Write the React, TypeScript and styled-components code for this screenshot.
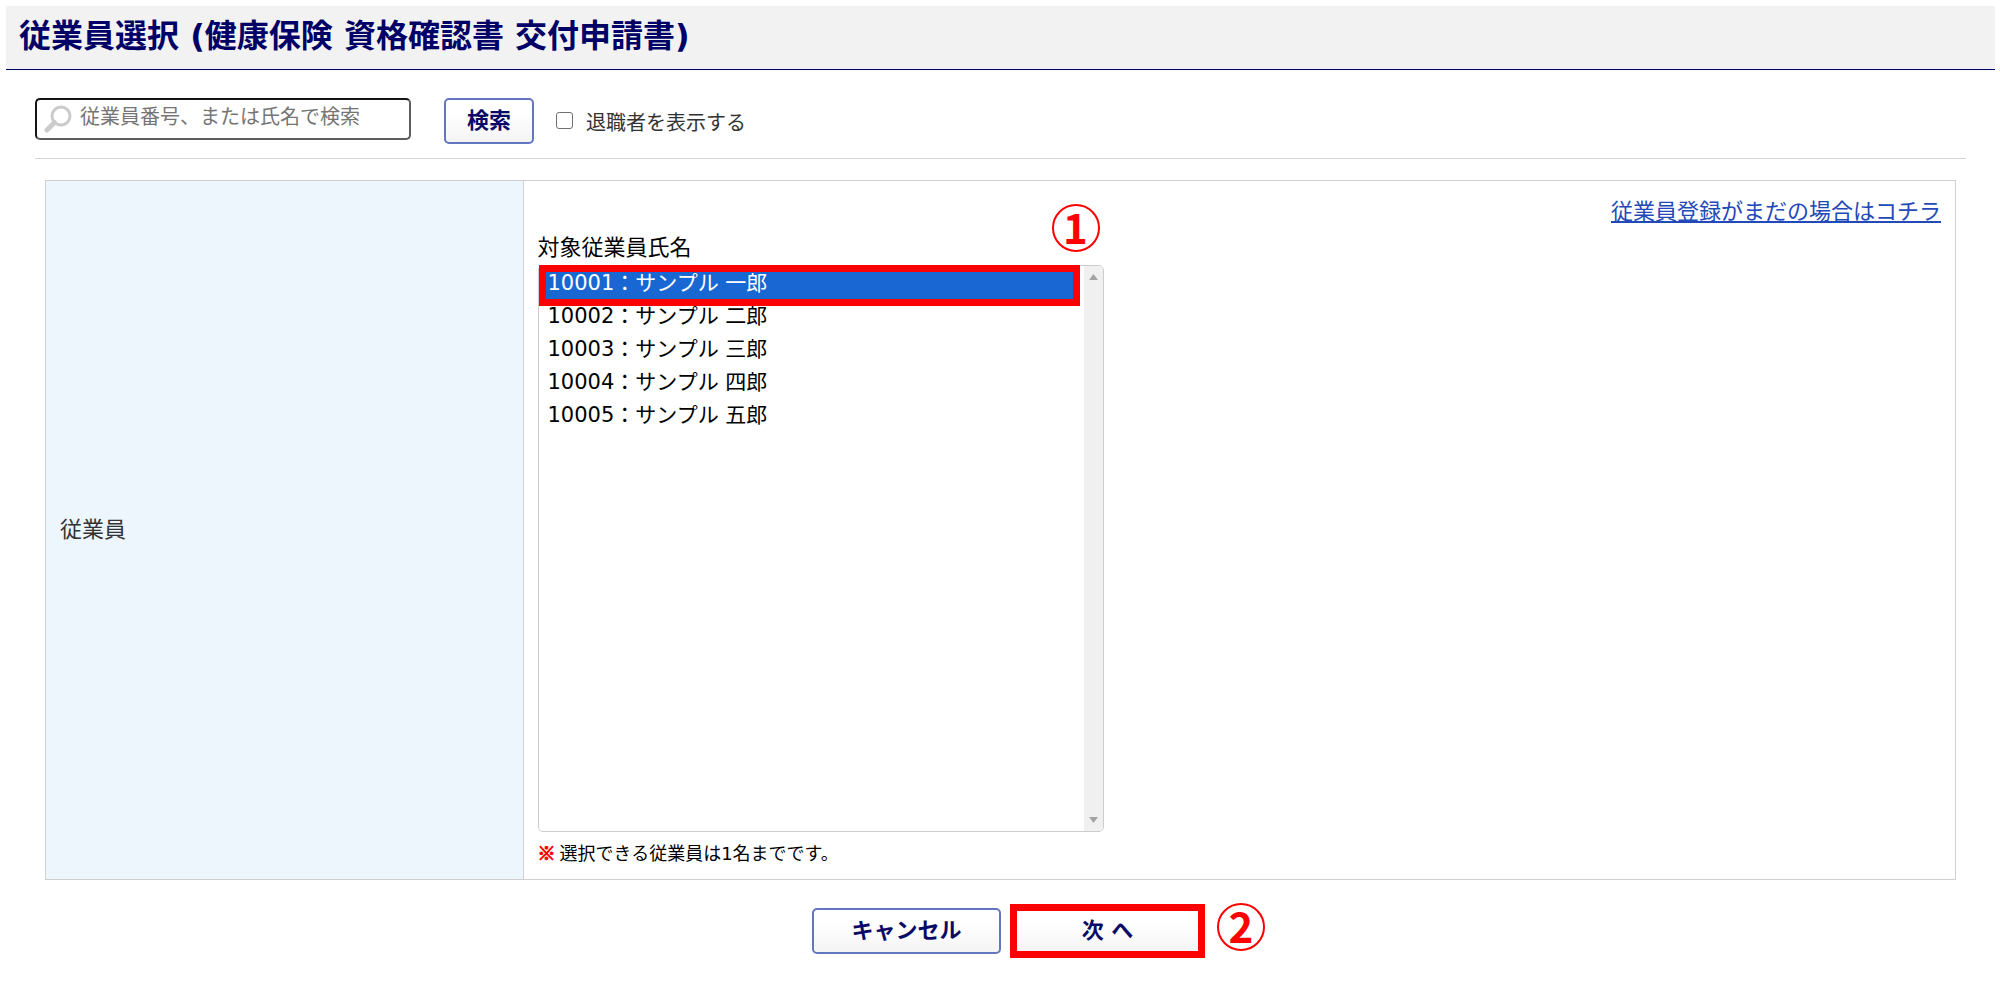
import React, { useState } from "react";
import styled, { createGlobalStyle } from "styled-components";

const GlobalStyle = createGlobalStyle`
  *, *::before, *::after { box-sizing: border-box; }
  body {
    margin: 0;
    background: #fff;
    color: #333;
    font-family: "DejaVu Sans", "Noto Sans CJK JP", sans-serif;
    font-size: 22px;
    line-height: 32px;
  }
  button, input, select { font-family: inherit; }
`;

const Page = styled.div`
  padding: 6px 5px 32px 6px;
`;

const Header = styled.header`
  padding: 10px 13px 13px;
  background: #f2f2f2;
  border-bottom: 1px solid #000066;
`;

const Title = styled.h1`
  margin: 0;
  color: #000066;
  font-size: 32px;
  line-height: 40px;
  font-weight: bold;
`;

const Main = styled.main`
  padding: 28px 29px 0;
`;

const SearchBar = styled.form`
  display: flex;
  align-items: flex-start;
  padding-bottom: 14px;
  border-bottom: 1px solid #d4d4d4;
`;

const SearchBox = styled.div`
  position: relative;
  width: 376px;
`;

const SearchIcon = styled.svg`
  position: absolute;
  left: 8px;
  top: 6px;
  width: 30px;
  height: 30px;
  pointer-events: none;
`;

const SearchInput = styled.input`
  display: block;
  width: 100%;
  height: 42px;
  padding: 0 8px 4px 43px;
  background: #fff;
  border: 2px solid;
  border-color: #151515 #5c5c5c #5c5c5c #151515;
  border-radius: 5px;
  color: #333;
  font-size: 20px;

  &::placeholder { color: #757575; opacity: 1; }
`;

const Button = styled.button<{ $width: number }>`
  width: ${({ $width }) => $width}px;
  height: 46px;
  padding: 0;
  background: linear-gradient(#ffffff 30%, #f4f4f4);
  border: 2px solid #6476c2;
  border-radius: 5px;
  color: #0a0a66;
  font-size: 22px;
  line-height: 32px;
  font-weight: bold;
`;

const SearchButton = styled(Button)`
  margin-left: 33px;
`;

const RetiredLabel = styled.label`
  display: flex;
  align-items: center;
  gap: 13px;
  margin: 9px 0 0 22px;
  font-size: 20px;
`;

const Checkbox = styled.input`
  width: 17px;
  height: 17px;
  margin: 0 0 6px;
  appearance: none;
  background: #fff;
  border: 1px solid #6f6f6f;
  border-radius: 3px;

  &:checked { background: #1967d2; }
`;

const FormTable = styled.table`
  width: calc(100% - 20px);
  margin: 21px 10px 0;
  border-collapse: collapse;
  table-layout: fixed;
`;

const HeadCell = styled.th`
  width: 25%;
  padding: 0 14px;
  background: #edf5fd;
  border: 1px solid #d0d0d0;
  font-weight: normal;
  text-align: left;
  vertical-align: middle;
`;

const BodyCell = styled.td`
  padding: 15px 14px 9px;
  background: #fff;
  border: 1px solid #d0d0d0;
  color: #000;
  vertical-align: top;
`;

const LinkRow = styled.div`
  text-align: right;
`;

const RegisterLink = styled.a`
  color: #2349b8;
  text-decoration: underline;
`;

const ListLabel = styled.label`
  display: block;
  padding: 4px 0 1px;
`;

const ListFrame = styled.div`
  position: relative;
  display: flex;
  width: 566px;
  max-width: 100%;
  height: 567px;
  border: 1px solid #ccc;
  border-radius: 5px;
`;

const EmployeeList = styled.select`
  flex: 1;
  min-width: 0;
  height: 100%;
  margin-right: 4px;
  padding: 0;
  overflow: hidden;
  background: #fff;
  border: 0;
  border-radius: 5px 0 0 5px;
  outline: none;
  color: #000;
  font-size: 21px;
`;

const Employee = styled.option`
  height: 33px;
  min-height: 33px;
  padding: 0 9px;
  line-height: 32px;

  &:checked {
    background: #1967d2 linear-gradient(#1967d2, #1967d2);
    color: #fff;
    -webkit-text-fill-color: #fff;
  }
`;

const ScrollRail = styled.div`
  display: flex;
  flex-direction: column;
  align-items: center;
  justify-content: space-between;
  width: 19px;
  padding: 8px 0;
  background: #f0f0f0;
  border-radius: 0 4px 4px 0;
`;

const Arrow = styled.svg`
  width: 9px;
  height: 6px;
  fill: #a3a3a3;
`;

const Highlight = styled.div`
  position: absolute;
  border: 7px solid #ff0000;
  pointer-events: none;
`;

const RowHighlight = styled(Highlight)`
  top: -1px;
  left: 0;
  right: 23px;
  height: 41px;
`;

const ButtonHighlight = styled(Highlight)`
  inset: -4px -3px;
`;

const StepBadge = styled.span`
  position: absolute;
  display: flex;
  align-items: center;
  justify-content: center;
  width: 48px;
  height: 48px;
  padding-bottom: 4px;
  border: 2px solid #ff0000;
  border-radius: 50%;
  color: #ff0000;
  font-family: "Noto Sans CJK JP", sans-serif;
  font-size: 42px;
  line-height: 40px;
  font-weight: bold;
`;

const ListStep = styled(StepBadge)`
  top: -62px;
  right: 3px;
`;

const NextStep = styled(StepBadge)`
  top: -5px;
  right: -63px;
`;

const Note = styled.p`
  margin: 4px 0 0;
  font-size: 18px;
`;

const NoteMark = styled.span`
  margin-right: 4px;
  color: #ff0000;
  font-family: "Noto Sans CJK JP", sans-serif;
  font-weight: 900;
  -webkit-text-stroke: 1px #ff0000;
`;

const Actions = styled.div`
  display: flex;
  justify-content: center;
  gap: 12px;
  padding: 28px 0 0 13px;
`;

const ActionSlot = styled.div`
  position: relative;
  display: flex;
`;

const employees = [
  { id: "10001", name: "サンプル 一郎" },
  { id: "10002", name: "サンプル 二郎" },
  { id: "10003", name: "サンプル 三郎" },
  { id: "10004", name: "サンプル 四郎" },
  { id: "10005", name: "サンプル 五郎" },
];

export default function App() {
  const [selected, setSelected] = useState("10001");

  return (
    <Page>
      <GlobalStyle />
      <Header>
        <Title>従業員選択 (健康保険 資格確認書 交付申請書)</Title>
      </Header>
      <Main>
        <SearchBar onSubmit={(e) => e.preventDefault()}>
          <SearchBox>
            <SearchInput
              type="text"
              aria-label="従業員検索"
              placeholder="従業員番号、または氏名で検索"
            />
            <SearchIcon viewBox="0 0 30 30" fill="none" stroke="#cbcbcb" aria-hidden="true">
              <circle cx="18" cy="12" r="9" strokeWidth="3" />
              <path d="M11.5 18.5 4 26" strokeWidth="5" strokeLinecap="round" />
            </SearchIcon>
          </SearchBox>
          <SearchButton type="submit" $width={90}>検索</SearchButton>
          <RetiredLabel>
            <Checkbox type="checkbox" />
            退職者を表示する
          </RetiredLabel>
        </SearchBar>

        <FormTable>
          <tbody>
            <tr>
              <HeadCell scope="row">従業員</HeadCell>
              <BodyCell>
                <LinkRow>
                  <RegisterLink href="#register">従業員登録がまだの場合はコチラ</RegisterLink>
                </LinkRow>
                <ListLabel htmlFor="employee-list">対象従業員氏名</ListLabel>
                <ListFrame>
                  <EmployeeList
                    id="employee-list"
                    size={17}
                    value={selected}
                    onChange={(e) => setSelected(e.target.value)}
                  >
                    {employees.map((employee) => (
                      <Employee key={employee.id} value={employee.id}>
                        {`${employee.id}：${employee.name}`}
                      </Employee>
                    ))}
                  </EmployeeList>
                  <ScrollRail aria-hidden="true">
                    <Arrow viewBox="0 0 9 6"><path d="M0 6 4.5 0 9 6Z" /></Arrow>
                    <Arrow viewBox="0 0 9 6"><path d="M0 0 4.5 6 9 0Z" /></Arrow>
                  </ScrollRail>
                  <RowHighlight />
                  <ListStep>1</ListStep>
                </ListFrame>
                <Note>
                  <NoteMark>※</NoteMark>
                  選択できる従業員は1名までです。
                </Note>
              </BodyCell>
            </tr>
          </tbody>
        </FormTable>

        <Actions>
          <Button type="button" $width={189}>キャンセル</Button>
          <ActionSlot>
            <Button type="button" $width={189}>次 へ</Button>
            <ButtonHighlight />
            <NextStep>2</NextStep>
          </ActionSlot>
        </Actions>
      </Main>
    </Page>
  );
}
